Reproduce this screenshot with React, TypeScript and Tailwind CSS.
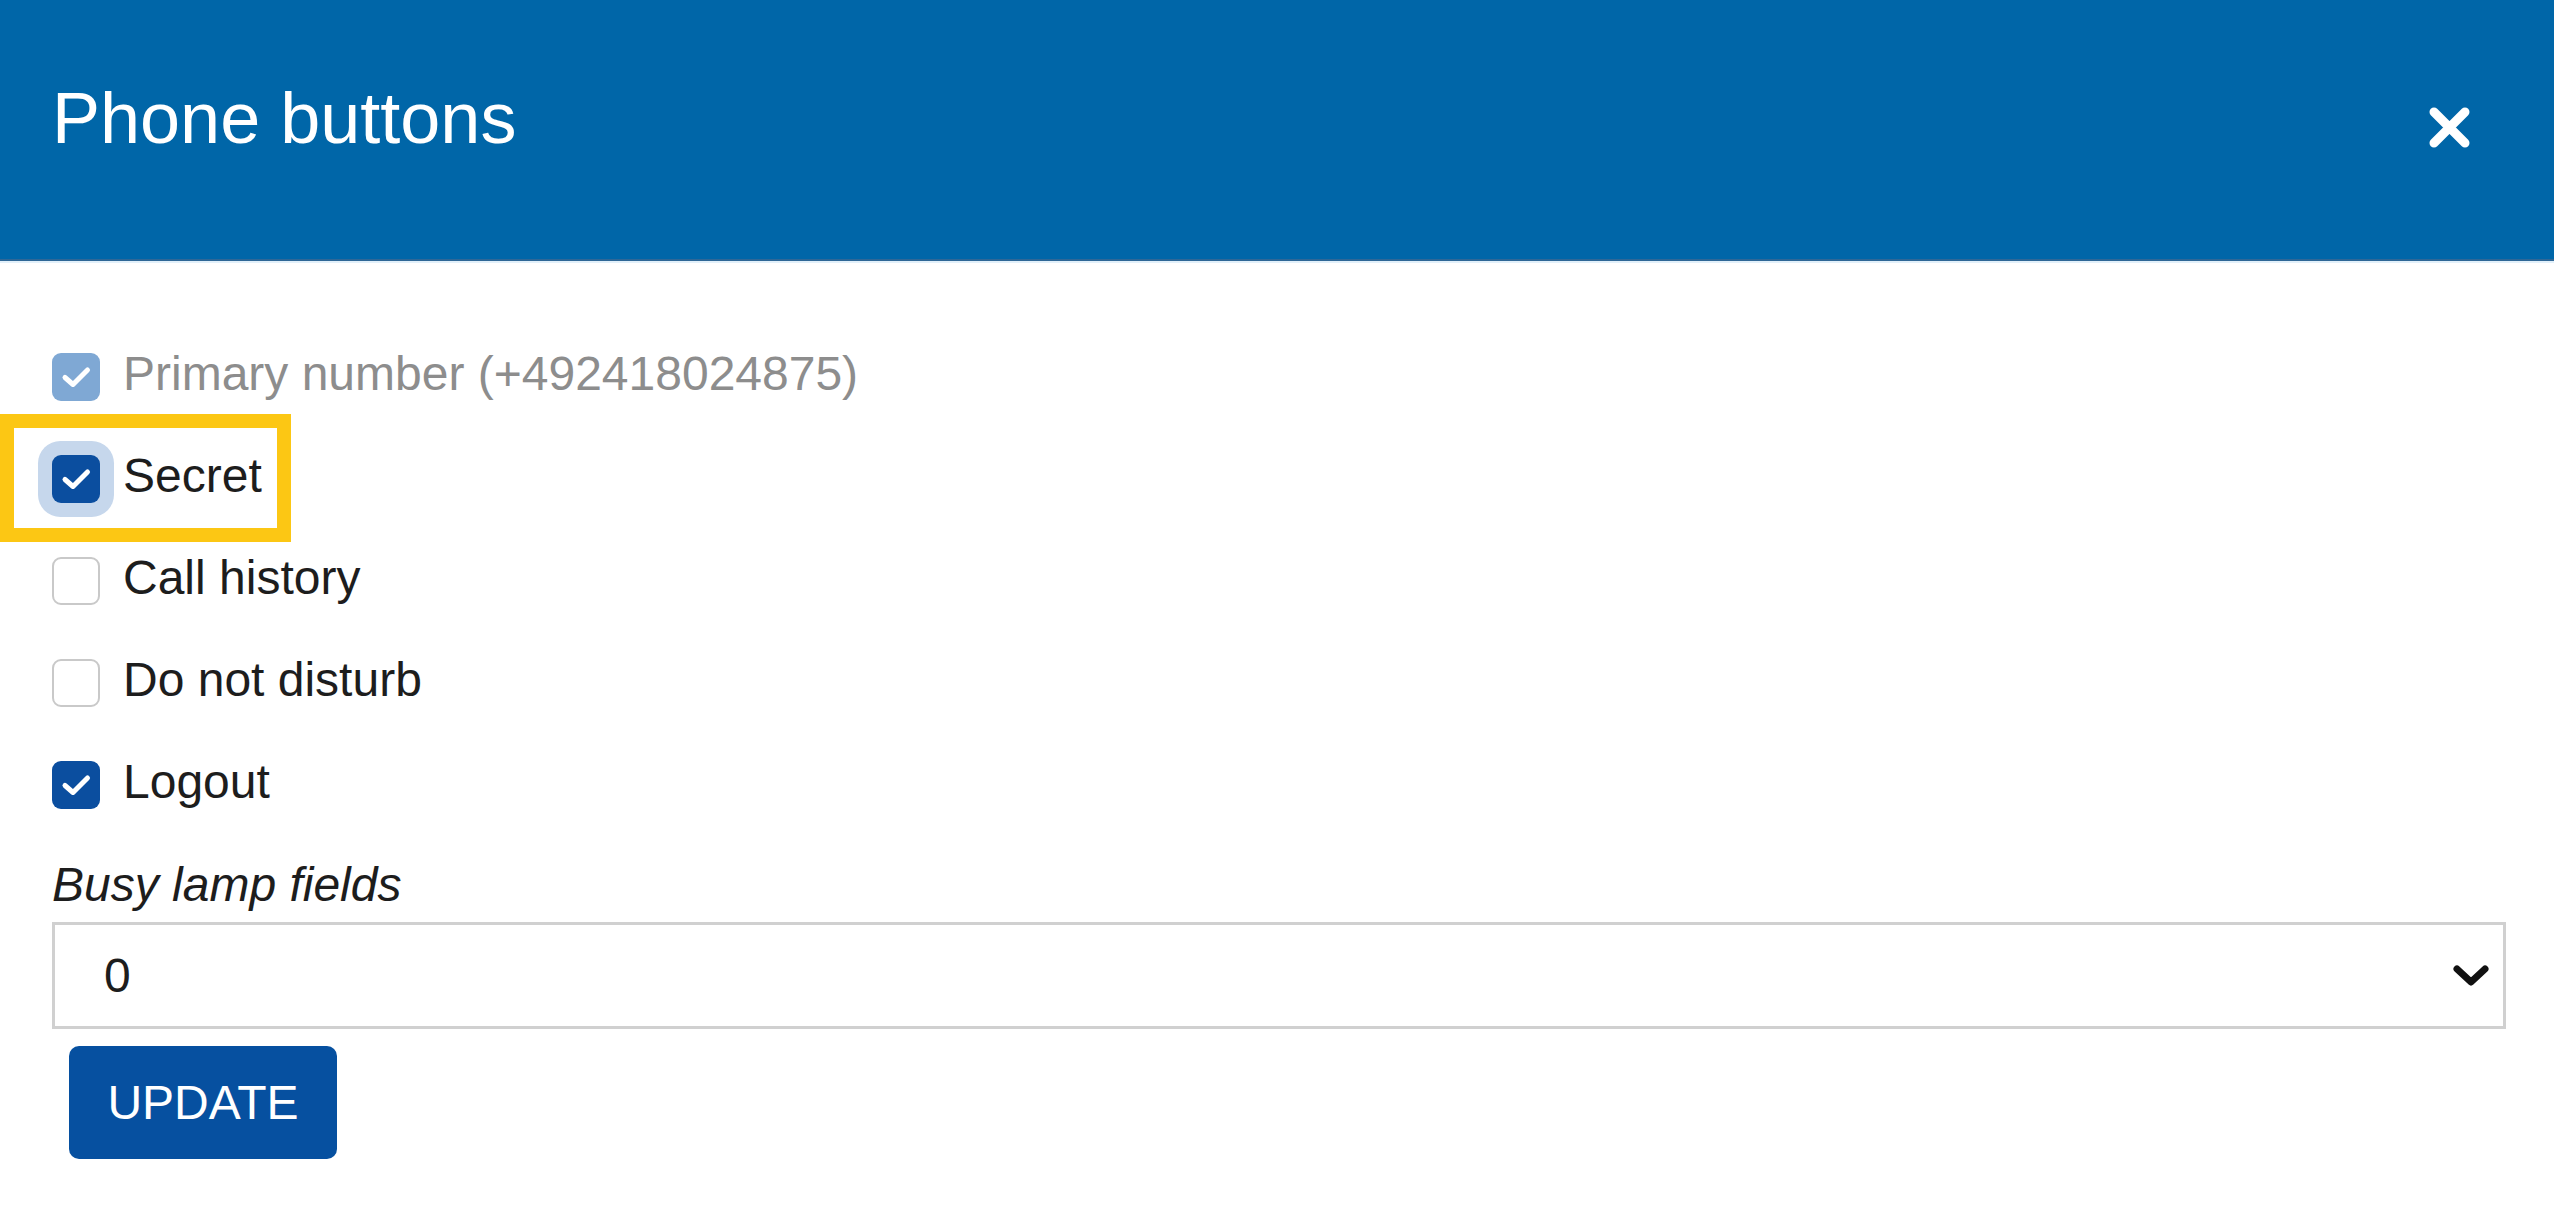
import React from "react";

interface OptionItem {
  id: string;
  label: string;
  checked: boolean;
  disabled?: boolean;
  focused?: boolean;
}

const options: OptionItem[] = [
  { id: "primary", label: "Primary number (+492418024875)", checked: true, disabled: true },
  { id: "secret", label: "Secret", checked: true, focused: true },
  { id: "history", label: "Call history", checked: false },
  { id: "dnd", label: "Do not disturb", checked: false },
  { id: "logout", label: "Logout", checked: true },
];

function CheckBox({ checked, disabled, focused }: { checked: boolean; disabled?: boolean; focused?: boolean }) {
  let cls = "w-[48px] h-[48px] rounded-[9px] flex items-center justify-center shrink-0";
  if (checked) {
    cls += disabled ? " bg-[#7fa8d4]" : " bg-[#0b4e9f]";
  } else {
    cls += " bg-white border-[2px] border-[#c9c9c9]";
  }
  if (focused) cls += " shadow-[0_0_0_14px_#c6d7ec]";
  return (
    <div className={cls}>
      {checked && (
        <svg width="48" height="48" viewBox="0 0 48 48" fill="none">
          <path d="M13 24.5 L21 31.5 L35.5 17" stroke="white" strokeWidth="5" strokeLinecap="round" strokeLinejoin="round" />
        </svg>
      )}
    </div>
  );
}

export default function App() {
  return (
    <div className="w-[2554px] h-[1227px] bg-white overflow-hidden font-['Liberation_Sans',Arial,sans-serif]">
      {/* Header */}
      <div className="h-[261px] bg-[#0066a8] border-b-[2px] border-[#2f6796] shadow-[0_2px_0_#e2f0fa] flex items-start justify-between pl-[52px] pr-[83px]">
        <h1 className="text-white text-[72px] leading-none pt-[82px] font-normal">Phone buttons</h1>
        <button className="mt-[106px]">
          <svg width="43" height="43" viewBox="0 0 43 43">
            <path d="M6 6 L37 37 M37 6 L6 37" stroke="white" strokeWidth="9" strokeLinecap="round" />
          </svg>
        </button>
      </div>

      {/* Body */}
      <div className="pl-[52px] pr-[48px] pt-[65px]">
        <div className="flex flex-col">
          {options.map((o) => (
            <div key={o.id} className="relative h-[102px] flex items-center gap-[23px]">
              {o.focused && (
                <div className="absolute left-[-52px] top-[-14px] w-[291px] h-[128px] border-[14px] border-[#fcc714]" />
              )}
              <CheckBox checked={o.checked} disabled={o.disabled} focused={o.focused} />
              <span
                className={`text-[48px] leading-[48px] -mt-[6px] ${
                  o.disabled ? "text-[#8d8d8d]" : "text-[#1d1d1d]"
                }`}
              >
                {o.label}
              </span>
            </div>
          ))}
        </div>

        <div className="mt-[21px] text-[48px] leading-[56px] italic text-[#1d1d1d]">Busy lamp fields</div>

        <div className="mt-[9px] h-[107px] border-[3px] border-[#d0d0d0] flex items-center justify-between pl-[49px] pr-[14px]">
          <span className="text-[48px] leading-none text-[#1d1d1d]">0</span>
          <svg width="36" height="24" viewBox="0 0 36 24">
            <path d="M4 5 L18 18 L32 5" stroke="#111" strokeWidth="7" fill="none" strokeLinecap="round" strokeLinejoin="round" />
          </svg>
        </div>

        <button className="mt-[17px] ml-[17px] w-[268px] h-[113px] rounded-[10px] bg-[#0650a0] text-white text-[48px] leading-none">
          UPDATE
        </button>
      </div>
    </div>
  );
}
